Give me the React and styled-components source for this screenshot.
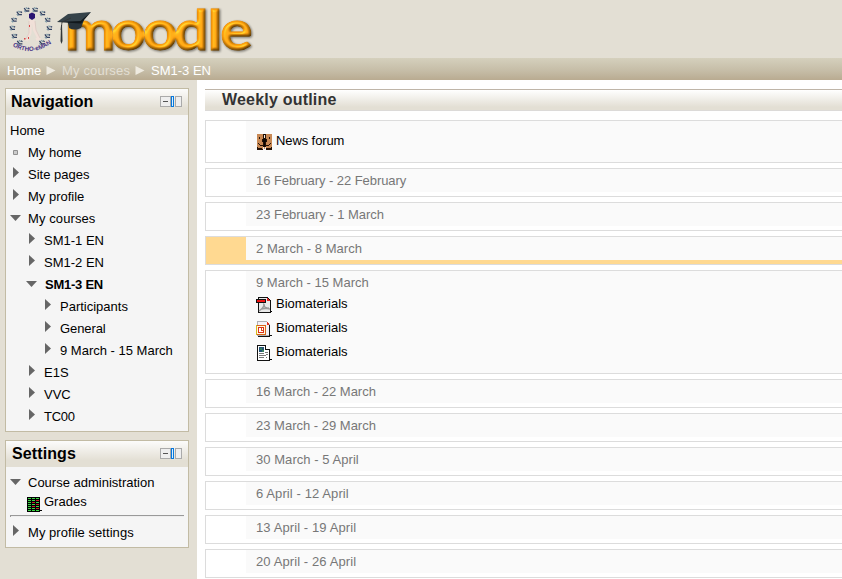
import React from "react";
import styled, { createGlobalStyle } from "styled-components";

const GlobalStyle = createGlobalStyle`
  * { box-sizing: border-box; }
  html, body { margin: 0; padding: 0; overflow: hidden; }
  body { background: #fff; font: 13px/16px "Liberation Sans", Arial, sans-serif; color: #000; }
  svg { display: block; flex: none; overflow: visible; }
`;

const Page = styled.div`
  width: 100%;
  height: 579px;
  display: flex;
  flex-direction: column;
  overflow: hidden;
`;
const Header = styled.header`
  height: 58px;
  flex: none;
  background: #e3dfd4;
`;
const Breadcrumbs = styled.nav`
  height: 22px;
  flex: none;
  display: flex;
  align-items: center;
  padding: 3px 0 0 7px;
  gap: 5px;
  background: linear-gradient(#d5d0bd, #c5bca6 60%, #b9ab91);
`;
const Crumb = styled.span`
  color: ${(p) => (p.$muted ? "#e3dfd4" : "#fff")};
  letter-spacing: ${(p) => p.$spacing || 0}px;
  white-space: nowrap;
`;
const Columns = styled.div`
  display: flex;
  flex: 1;
  min-height: 0;
`;
const Sidebar = styled.aside`
  width: 197px;
  flex: none;
  padding: 8px 8px 0 5px;
  background: #e3dfd4;
  display: flex;
  flex-direction: column;
  gap: 8px;
`;
const Block = styled.section`
  height: ${(p) => p.$height}px;
  border: 1px solid #c2bba4;
  background: #f5f5f5;
`;
const BlockHeader = styled.div`
  height: 26px;
  display: flex;
  align-items: center;
  justify-content: space-between;
  padding: 0 6px 2px ${(p) => p.$indent}px;
  background: linear-gradient(#fcfcfb, #e3dfd4 75%);
`;
const BlockTitle = styled.h2`
  margin: 0;
  padding-top: 1px;
  font-size: 16px;
  line-height: 18px;
  letter-spacing: ${(p) => p.$spacing || 0}px;
`;
const TreeRow = styled.div`
  height: 22px;
  display: flex;
  align-items: center;
  padding-left: ${(p) => 4 + p.$level * 16}px;
`;
const Tree = styled.div`
  padding-top: 5px;
`;
const Marker = styled.span`
  width: 18px;
  height: 16px;
  flex: none;
  margin-right: ${(p) => p.$gap}px;
`;
const Label = styled.span`
  white-space: nowrap;
  font-weight: ${(p) => (p.$bold ? 700 : 400)};
  letter-spacing: ${(p) => p.$spacing || 0}px;
`;
const GradeRow = styled.div`
  display: flex;
  height: 17px;
  padding-left: 21px;
  gap: 1px;
`;
const Divider = styled.div`
  height: 2px;
  margin: 4px 4px 5px;
  border-top: 1px solid #999;
  border-left: 1px solid #999;
  background: #eee;
`;
const Main = styled.main`
  flex: 1;
  min-width: 0;
  padding: 9px 0 0 8px;
`;
const OutlineHeading = styled.h1`
  margin: 0 0 9px;
  height: 22px;
  padding: 1px 0 0 17px;
  border-top: 1px solid #bfb5a8;
  border-bottom: 1px solid #dcdad8;
  background: linear-gradient(#fff, #e3dfd4 85%);
  color: #333;
  font-size: 16px;
  line-height: 17px;
  letter-spacing: 0.2px;
`;
const Week = styled.section`
  height: ${(p) => p.$height}px;
  margin-bottom: 5px;
  border: 1px solid #dcdcdc;
  border-right: 0;
  padding: 0 0 ${(p) => (p.$full ? 0 : 4)}px 40px;
  background: ${(p) => (p.$current ? "#ffd991" : "#fff")};
`;
const WeekContent = styled.div`
  height: 100%;
  padding: ${(p) => p.$top}px 0 0 10px;
  background: #fafafa;
`;
const WeekTitle = styled.div`
  height: 21px;
  color: #777;
  letter-spacing: ${(p) => p.$spacing || 0}px;
`;
const Activity = styled.div`
  display: flex;
  gap: 4px;
  height: 24px;
`;
const ActivityIcon = styled.span`
  padding-top: ${(p) => p.$drop}px;
`;

function MoodleLogo() {
  return (
    <svg width="260" height="58" viewBox="0 0 260 58">
      <defs>
        <filter id="bevel" x="-5%" y="-15%" width="112%" height="135%" colorInterpolationFilters="sRGB">
          <feGaussianBlur in="SourceAlpha" stdDeviation="1.7" result="b" />
          <feDiffuseLighting in="b" surfaceScale="3" diffuseConstant="1.2" lightingColor="#fff" result="l">
            <feDistantLight azimuth="235" elevation="55" />
          </feDiffuseLighting>
          <feComposite in="SourceGraphic" in2="l" operator="arithmetic" k1="0.6" k2="0.42" k3="0" k4="0" result="lit" />
          <feSpecularLighting in="b" surfaceScale="3" specularConstant="0.5" specularExponent="14" lightingColor="#ffd77a" result="sp">
            <feDistantLight azimuth="235" elevation="45" />
          </feSpecularLighting>
          <feComposite in="lit" in2="sp" operator="arithmetic" k1="0" k2="1" k3="0.6" k4="0" result="shine" />
          <feComposite in="shine" in2="SourceAlpha" operator="in" result="face" />
          <feGaussianBlur in="SourceAlpha" stdDeviation="0.8" result="s" />
          <feOffset in="s" dx="1" dy="1" result="so" />
          <feComponentTransfer in="so" result="shadow">
            <feFuncA type="linear" slope="0.45" />
          </feComponentTransfer>
          <feMerge>
            <feMergeNode in="shadow" />
            <feMergeNode in="face" />
          </feMerge>
        </filter>
        <path id="seal" d="M11 45 Q31 58 52 43" />
      </defs>
      <text
        transform="scale(1.08 1)"
        x="60 102.8 132.2 161.4 192.2 204"
        y="49.5"
        fontFamily="Lato, sans-serif"
        fontWeight="700"
        fontSize="56"
        fill="#f0970c"
        stroke="#f0970c"
        strokeWidth="1.3"
        filter="url(#bevel)"
      >
        moodle
      </text>
      <path d="M67.500 21 L69 28 Q74 31 81 28 L84 20Z" fill="#28333a" />
      <path d="M57 22 L68 14 L91 12 L81 22 Z" fill="#36434a" />
      <path d="M57 22 L80.500 21 L91 12 L81 23.500 Z" fill="#11181c" />
      <path d="M71 18 L62 22 L61 30" fill="none" stroke="#333" strokeWidth=".8" />
      <path d="M61 25 L60.500 41 L61.500 44 L62.500 41 L62 25Z" fill="#33383a" />
      {Array.from({ length: 12 }, (_, i) => {
        const a = ((-90 + (i - 5.5) * 26) * Math.PI) / 180;
        return (
          <g
            key={i}
            transform={`translate(${(31 + 18.5 * Math.cos(a)).toFixed(1)} ${(27.5 + 18.5 * Math.sin(a)).toFixed(1)})`}
            fill="none"
            strokeWidth="1.3"
          >
            <path d="M-2.600 -1.500 L-.5 1.500 L2.500 1.500 M1 -1.500 L2.600 -.5" stroke="#344263" />
            <path d="M-1 -2 L1 -.5 M-2.600 1 L-1 2.600" stroke="#7b98a4" />
          </g>
        );
      })}
      <path d="M30.500 20 L30 33 L26.500 41 M33 20 L34.500 30 L39 38.500 L36 39.500" stroke="#f1e0d8" strokeWidth="3" fill="none" />
      <path d="M29 21 L29 33 L26 39 M35 21 L36 30 L40 38" stroke="#d5c0ba" strokeWidth=".6" fill="none" />
      <path d="M29 14 L32 12.500 L35 14 L35 18 L32 20 L29 18Z" fill="#2a1572" />
      <path d="M29 25h1v2h-1zM24 38h1.500v1.500h-1.500zM28 37h1v2h-1z" fill="#d84545" />
      <text fontFamily="Liberation Sans, sans-serif" fontWeight="700" fontSize="6.200" fill="#4a3486">
        <textPath href="#seal" startOffset="1.500">ORTHO-eMAN</textPath>
      </text>
    </svg>
  );
}

const CrumbArrow = () => (
  <svg width="11" height="9" viewBox="0 0 11 9">
    <path d="M.5 0 L9.500 4.500 L.5 9Z" fill="#eeeae0" />
  </svg>
);

function TreeMarker({ kind }) {
  return (
    <svg width="18" height="16" viewBox="0 0 18 16" fill="#666">
      {kind === "open" && <path d="M0 4h11l-5.500 6z" />}
      {kind === "closed" && <path d="M3 0l6 5.500-6 5.500z" />}
      {kind === "leaf" && <path d="M3.500 5.500h4v4h-4z" fill="#ccc" stroke="#909090" />}
    </svg>
  );
}

const BlockControls = () => (
  <svg width="22" height="11" viewBox="0 0 22 11" shapeRendering="crispEdges">
    <path d="M.5 .5h10v10h-10z" fill="#eee" stroke="#aaa" />
    <path d="M3 5h5v1h-5z" fill="#555" />
    <path d="M11.500 .5h2v10h-2z" fill="#d9efff" stroke="#0878dc" />
    <path d="M15.500 .5h6v10h-6z" fill="#eee" stroke="#aaa" />
  </svg>
);

const GradesIcon = () => (
  <svg width="16" height="15" viewBox="0 0 16 15" shapeRendering="crispEdges">
    <path d="M0 0h13v13h2v1h-2v1H0z" fill="#000" />
    {[1, 3, 5, 7, 9, 11, 13].map((y, i) => (
      <React.Fragment key={y}>
        <path d={`M1 ${y}h3v1h-3zM5 ${y}h3v1h-3zM9 ${y}h3v1h-3z`} fill="#3bd743" />
        {i > 0 && i < 6 && <path d={`M${i % 2 ? 9 : 5} ${y}h3v1h-3z`} fill="#c7202f" />}
      </React.Fragment>
    ))}
  </svg>
);

const ForumIcon = () => (
  <svg width="16" height="16" viewBox="0 0 16 16" shapeRendering="crispEdges">
    <path d="M1 0h15v15h-15z" fill="#c88955" />
    <path d="M7 0h1v5H7zM9 0h1v5H9zM6 5h1v3H6zM10 5h1v3h-1zM7 8h1v5H7zM9 8h1v5H9z" fill="#241206" />
    <path d="M8 0h1v13H8zM7 5h1v3H7zM9 5h1v3H9z" fill="#0d0804" />
    <path d="M8 1h1v3H8zM7 13h1v2H7zM9 13h1v2H9z" fill="#f5eee6" />
    <path d="M3 3h1v2H3zM13 3h1v2h-1zM2 9h1v1H2zM3 10h1v1H3zM4 11h3v1H4zM10 11h3v1h-3zM13 10h1v1h-1zM14 9h1v1h-1zM1 13h1v1h4v1h1v1H1zM10 14h5v-1h1v3h-6z" fill="#241206" />
  </svg>
);

const PdfIcon = () => (
  <svg width="16" height="16" viewBox="0 0 16 16" shapeRendering="crispEdges">
    <path d="M2.500 .5h9l3 3v12h-12z" fill="#e9e9e9" stroke="#111" />
    <path d="M0 2h10v4H0z" fill="#111" />
    <path d="M1 3h8v2H1z" fill="#ed1111" />
    <path d="M11 1h1v1h1v1h1v1h-3z" fill="#e62020" />
    <path d="M7 7c2 0 1 4-4 7M8 7c0 4 3 5 6 5M5 12l8-1" fill="none" stroke="#999" strokeWidth="1.400" shapeRendering="auto" />
    <path d="M15 14h1v1h-1z" />
  </svg>
);

const SlidesIcon = () => (
  <svg width="16" height="16" viewBox="0 0 16 16" shapeRendering="crispEdges">
    <path d="M1.500 .5h9l3 3v11h-12z" fill="#f2f1f8" stroke="#b0b0b5" />
    <path d="M13 4h1v10h2v1h-2v1H2v-1h11z" fill="#111" />
    <path d="M11 1h1v1h1v2h-2z" fill="#df3324" />
    <path d="M.5 4.500h9v9h-9z" fill="#fff7df" stroke="#d96418" />
    <path d="M2.500 6.500h5v5h-5z" fill="#fff" stroke="#db3218" />
    <path d="M5 7h1v2h1v1h-2z" fill="#dc4a21" />
    <path d="M0 4h1v10H0z" fill="#d6b619" />
  </svg>
);

const DocumentIcon = () => (
  <svg width="16" height="16" viewBox="0 0 16 16" shapeRendering="crispEdges">
    <path d="M1.500 .5h8l4 4v11h-12z" fill="#fff" stroke="#111" />
    <path d="M9.500 .5v4h4" fill="#fff" stroke="#111" />
    <path d="M3 2h5v5H3z" fill="#245275" />
    <path d="M4 3h2v2H4zM6 5h2v2H6z" fill="#378060" />
    <path d="M3 8h5v1H3zM9 7h3v1H9zM3 10h7v1H3zM3 12h5v1H3zM10 9h2v1h-2zM10 12h1v1h-1z" fill="#777" />
    <path d="M14 14h2v1h-2z" />
  </svg>
);

const navigation = [
  { text: "Home", level: 0 },
  { text: "My home", level: 0, kind: "leaf" },
  { text: "Site pages", level: 0, kind: "closed" },
  { text: "My profile", level: 0, kind: "closed" },
  { text: "My courses", level: 0, kind: "open", spacing: 0.1 },
  { text: "SM1-1 EN", level: 1, kind: "closed" },
  { text: "SM1-2 EN", level: 1, kind: "closed" },
  { text: "SM1-3 EN", level: 1, kind: "open", bold: true, spacing: -0.25 },
  { text: "Participants", level: 2, kind: "closed" },
  { text: "General", level: 2, kind: "closed", spacing: -0.1 },
  { text: "9 March - 15 March", level: 2, kind: "closed" },
  { text: "E1S", level: 1, kind: "closed" },
  { text: "VVC", level: 1, kind: "closed" },
  { text: "TC00", level: 1, kind: "closed", spacing: -0.3 },
];

const weeks = [
  { height: 43, top: 12, items: [["News forum", ForumIcon, -0.1]] },
  { title: "16 February - 22 February", spacing: -0.06 },
  { title: "23 February - 1 March", spacing: -0.03 },
  { title: "2 March - 8 March" , spacing: 0.03, current: true },
  {
    title: "9 March - 15 March",
    height: 104,
    items: [
      ["Biomaterials", PdfIcon],
      ["Biomaterials", SlidesIcon],
      ["Biomaterials", DocumentIcon],
    ],
  },
  { title: "16 March - 22 March" },
  { title: "23 March - 29 March" },
  { title: "30 March - 5 April", spacing: 0.05 },
  { title: "6 April - 12 April", spacing: 0.1 },
  { title: "13 April - 19 April", spacing: 0.1 },
  { title: "20 April - 26 April", spacing: 0.1 },
];

function TreeItem({ text, level, kind, bold, spacing }) {
  return (
    <TreeRow $level={level}>
      {kind && (
        <Marker $gap={level ? (bold ? 1 : 0) : 0}>
          <TreeMarker kind={kind} />
        </Marker>
      )}
      <Label $bold={bold} $spacing={spacing}>{text}</Label>
    </TreeRow>
  );
}

export default function App() {
  return (
    <Page>
      <GlobalStyle />
      <Header>
        <MoodleLogo />
      </Header>
      <Breadcrumbs>
        <Crumb $spacing={-0.15}>Home</Crumb>
        <CrumbArrow />
        <Crumb $muted $spacing={0.15}>My courses</Crumb>
        <CrumbArrow />
        <Crumb>SM1-3 EN</Crumb>
      </Breadcrumbs>
      <Columns>
        <Sidebar>
          <Block $height={344}>
            <BlockHeader $indent={5}>
              <BlockTitle $spacing={0.05}>Navigation</BlockTitle>
              <BlockControls />
            </BlockHeader>
            <Tree>
              {navigation.map((item) => (
                <TreeItem key={item.text} {...item} />
              ))}
            </Tree>
          </Block>
          <Block $height={108}>
            <BlockHeader $indent={6}>
              <BlockTitle $spacing={0.1}>Settings</BlockTitle>
              <BlockControls />
            </BlockHeader>
            <Tree>
              <TreeItem text="Course administration" level={0} kind="open" />
              <GradeRow>
                <ActivityIcon $drop={3}>
                  <GradesIcon />
                </ActivityIcon>
                <Label>Grades</Label>
              </GradeRow>
              <Divider />
              <TreeItem text="My profile settings" level={0} kind="closed" spacing={0.05} />
            </Tree>
          </Block>
        </Sidebar>
        <Main>
          <OutlineHeading>Weekly outline</OutlineHeading>
          {weeks.map(({ title, spacing, height = 29, top = 4, items = [], current }, i) => (
            <Week key={i} $height={height} $full={items.length > 0} $current={current}>
              <WeekContent $top={top}>
                {title && <WeekTitle $spacing={spacing}>{title}</WeekTitle>}
                {items.map(([name, Icon, nameSpacing], n) => (
                  <Activity key={n}>
                    <ActivityIcon $drop={1}>
                      <Icon />
                    </ActivityIcon>
                    <Label $spacing={nameSpacing}>{name}</Label>
                  </Activity>
                ))}
              </WeekContent>
            </Week>
          ))}
        </Main>
      </Columns>
    </Page>
  );
}
